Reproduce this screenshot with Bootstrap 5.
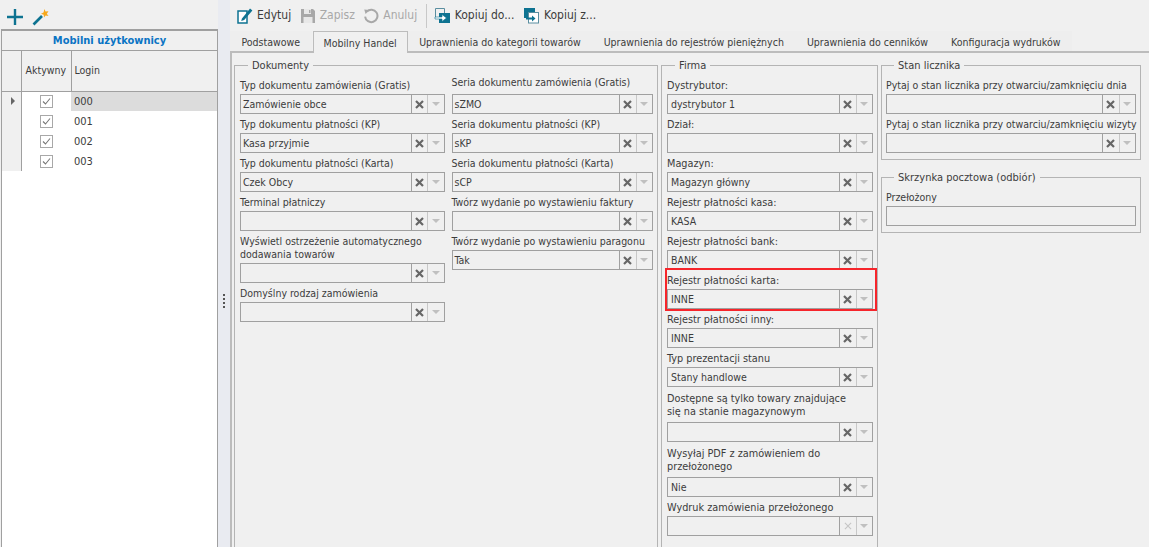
<!DOCTYPE html>
<html lang="pl"><head><meta charset="utf-8"><title>Mobilni użytkownicy</title>
<link href="https://cdn.jsdelivr.net/npm/bootstrap@5.3.0/dist/css/bootstrap.min.css" rel="stylesheet">
<style>
html,body{height:100%;overflow:hidden}
body{background:#f0f0f0;color:#3c3c3c;font-family:"DejaVu Sans Condensed","DejaVu Sans","Noto Sans",sans-serif;font-stretch:condensed;font-size:10.5px;line-height:13px}
.shell{height:547px;width:1149px}
.leftpane{width:218px;flex:none}
.lefttools{height:29px;padding:5px 0 0 7px;gap:9px;align-items:center}
.gridbox{flex:1;margin-left:1px;border:1px solid #a0a0a0;border-top-width:2px;background:#fff;border-bottom:0}
.gridtitle{height:20px;background:#f0f0f0;color:#0a74c4;font-weight:700;font-size:11px;text-align:center;line-height:19px;border-bottom:1px solid #a0a0a0}
.ugrid{width:auto;margin:0;border-collapse:collapse;table-layout:fixed;--bs-table-bg:transparent}
.ugrid th,.ugrid td{padding:0;border:0;font-weight:400;font-size:10.5px;color:#3c3c3c;box-shadow:none}
.ugrid thead th{height:40px;background:#f0f0f0;border-right:1px solid #a0a0a0;border-bottom:1px solid #a0a0a0;vertical-align:middle;padding:0 0 1px 4px}
.ugrid thead th.cind{padding:0}
.ugrid thead th.clog{border-right:0}
.cind{width:19px;border-right:1px solid #a0a0a0!important;background:#f0f0f0!important}
.cact{width:50px;text-align:center}
.clog{width:146px;padding-left:3px!important}
.ugrid tbody td{height:20px;vertical-align:middle;font-size:11px}
.ugrid tbody tr.sel td.clog{background:#dcdcdc}
.ptr{width:0;height:0;border-left:4px solid #666;border-top:4px solid transparent;border-bottom:4px solid transparent;margin-left:9px}
.cbx{display:block;margin:0 auto}
.splitter{width:12px;flex:none;background:#e9ebf1;gap:2px;align-items:center;justify-content:center;padding-top:55px}
.splitter i{display:block;width:2px;height:2px;background:#555}
.rightpane{flex:1;min-width:0}
.toptools{height:31px;align-items:center;padding:0 0 0 7px}
.tbtn{display:flex;align-items:center;gap:4px;padding:0;margin-right:8.5px;font-size:12px;color:#3c3c3c}
.tbtn.off{color:#a8a8a8}
.tsep{width:1px;height:24px;background:#c8c8c8;margin:0 7px 0 0}
.tabline{height:22px;margin:0;border-bottom:2px solid #bcbcbc;padding-left:0;flex-wrap:nowrap;--bs-nav-tabs-border-width:0}
.tabline .nav-link{height:20px;padding:0;color:#3c3c3c;font-size:10.5px;line-height:22px;border:0;border-radius:0;background:none;margin:0;white-space:nowrap}
.tabline .nav-item{padding:0 11.5px;background:#eeeeee}
.tabline .nav-item.on{border:1px solid #bcbcbc;border-bottom:0;background:#f0f0f0;height:22px;padding:0 10px;margin:0 0 -2px 1px}
.tabbody{flex:1;border-left:2px solid #bcbcbc;padding:6px 8px 0 2px;gap:3px;min-height:0;overflow:hidden}
.grp{border:1px solid #b4b4b4;padding:0 4px 3px;margin:0;min-width:0}
.grp legend{float:none;width:auto;font-size:11px;line-height:13px;margin:0 0 6px 8px;padding:0 4px;color:#3c3c3c}
.gdoc{width:424px;flex:none;height:600px;padding-left:5px}
.gfirm{width:217px;flex:none;height:600px;padding-left:5px}
.gfirm .flabel{font-size:10.8px}
.gfirm .combo .val{padding-left:3px}
.gside{width:260px;flex:none;gap:11px}
.gside .flabel{white-space:nowrap}
.field{margin-bottom:3px}
.flabel{display:block;padding-top:1px;margin:0 0 2px}
.combo{height:20px;border:1px solid #a0a0a0;display:flex;align-items:stretch;background:#f0f0f0}
.combo .val{flex:1;padding-left:2px;line-height:19px;font-size:10.5px;white-space:nowrap;overflow:hidden}
.cclr,.cdrop{width:16.5px;border-left:1px solid #c8c8c8;display:flex;align-items:center;justify-content:center;flex:none}
.cclr{border-left-color:#a0a0a0}
.cdrop::after{content:"";width:0;height:0;border-top:4px solid #c0c0c0;border-left:4px solid transparent;border-right:4px solid transparent}
.xicon{width:9px;height:9px;display:block}
.xdim{width:8px;height:8px;display:block}
.col2{width:202px;margin-left:7px}
.col1{width:205px}
.liftlbl{margin-top:-3px;margin-bottom:5px}
.gfirm .twolbl{padding-top:2px;margin-bottom:4px}
.redbox{outline:2px solid #f6252b;margin:-3px -2px 3px 0;padding:3px 2px 0 0}
.plainbox{height:20px;border:1px solid #a0a0a0;background:#f0f0f0}
</style></head>
<body>
<svg width="0" height="0" class="position-absolute"><defs>
<symbol id="xm" viewBox="0 0 9 9"><path d="M1 1l7 7M8 1 1 8" stroke="#666" stroke-width="2.2"/></symbol>
<symbol id="chk" viewBox="0 0 13 13"><rect x=".5" y=".5" width="12" height="12" fill="#fff" stroke="#a8a8a8"/><path d="M3 6.5 5.5 9 10 3.5" fill="none" stroke="#777" stroke-width="1.1"/></symbol>
</defs></svg>
<div class="shell d-flex">
 <div class="leftpane d-flex flex-column">
  <div class="lefttools d-flex">
   <svg width="16" height="16" viewBox="0 0 16 16"><path d="M8 0v16M0 8h16" stroke="#0e7391" stroke-width="2.4"/></svg>
   <svg width="18" height="18" viewBox="0 0 18 18"><path d="M1.5 16.5 10 8" stroke="#0e7391" stroke-width="2.6"/><path d="M12.5 1l1 2.6 3-.3-1.7 2.4 1.7 2.3-2.9-.6-1.6 2.1-.3-2.7-2.7-1 2.5-1.3z" fill="#f7a81b"/></svg>
  </div>
  <div class="gridbox d-flex flex-column">
   <div class="gridtitle">Mobilni użytkownicy</div>
   <table class="table ugrid">
    <thead><tr><th class="cind"></th><th class="cact text-start">Aktywny</th><th class="clog">Login</th></tr></thead>
    <tbody>
     <tr class="sel"><td class="cind"><div class="ptr"></div></td><td class="cact"><svg class="cbx" width="13" height="13"><use href="#chk"/></svg></td><td class="clog">000</td></tr>
     <tr><td class="cind"></td><td class="cact"><svg class="cbx" width="13" height="13"><use href="#chk"/></svg></td><td class="clog">001</td></tr>
     <tr><td class="cind"></td><td class="cact"><svg class="cbx" width="13" height="13"><use href="#chk"/></svg></td><td class="clog">002</td></tr>
     <tr><td class="cind"></td><td class="cact"><svg class="cbx" width="13" height="13"><use href="#chk"/></svg></td><td class="clog">003</td></tr>
    </tbody>
   </table>
  </div>
 </div>
 <div class="splitter d-flex flex-column"><i></i><i></i><i></i><i></i></div>
 <div class="rightpane d-flex flex-column">
  <div class="toptools d-flex">
   <span class="tbtn"><svg width="16" height="17" viewBox="0 0 16 17"><path d="M2 4h8v12H1V4z" fill="#fff" stroke="#0e7391" stroke-width="1.5"/><path d="M5 11.5 13 1.5l2.4 1.9L7.2 13l-3 1z" fill="#0e7391"/></svg>Edytuj</span>
   <span class="tbtn off"><svg width="16" height="16" viewBox="0 0 16 16"><path d="M1 1h12l2 2v12H1z" fill="#a8a8a8"/><rect x="4" y="1" width="7" height="5" fill="#e8e8e8"/><rect x="9" y="2" width="1.5" height="3" fill="#a8a8a8"/><rect x="3.5" y="9" width="9" height="6" fill="#e8e8e8"/></svg>Zapisz</span>
   <span class="tbtn off"><svg width="16" height="16" viewBox="0 0 16 16"><path d="M3.8 3.6a6.2 6.2 0 1 1-1.7 5" fill="none" stroke="#a8a8a8" stroke-width="2"/><path d="M1.2 1.5l5.2.6-3.8 4z" fill="#a8a8a8"/></svg>Anuluj</span>
   <span class="tsep"></span>
   <span class="tbtn"><svg width="17" height="17" viewBox="0 0 17 17"><path d="M1.5 1.5h9v5M1.5 1.5v9h3" fill="none" stroke="#5a8ea0"/><rect x="5" y="6" width="11" height="10" fill="#0e7391"/><path d="M1 10h7V7.5l4.5 3.5L8 14.5V12H1z" fill="#fff" stroke="#0e7391" stroke-width=".6"/></svg>Kopiuj do...</span>
   <span class="tbtn"><svg width="17" height="17" viewBox="0 0 17 17"><rect x="1" y="1" width="11" height="10" fill="#0e7391"/><rect x="5.5" y="5.5" width="10" height="10.5" fill="#fff" stroke="#5a8ea0"/><path d="M3 10.5h6V8.5l3.5 3L9 14.5V12.5H3z" fill="#0e7391"/></svg>Kopiuj z...</span>
  </div>
  <ul class="nav nav-tabs tabline">
   <li class="nav-item"><a class="nav-link" href="#">Podstawowe</a></li>
   <li class="nav-item on"><a class="nav-link" href="#">Mobilny Handel</a></li>
   <li class="nav-item"><a class="nav-link" href="#">Uprawnienia do kategorii towarów</a></li>
   <li class="nav-item"><a class="nav-link" href="#">Uprawnienia do rejestrów pieniężnych</a></li>
   <li class="nav-item"><a class="nav-link" href="#">Uprawnienia do cenników</a></li>
   <li class="nav-item"><a class="nav-link" href="#">Konfiguracja wydruków</a></li>
  </ul>
  <div class="tabbody d-flex">
   <fieldset class="grp gdoc"><legend>Dokumenty</legend>
    <div class="d-flex">
     <div class="col1">
      <div class="field"><label class="flabel">Typ dokumentu zamówienia (Gratis)</label><div class="combo"><span class="val">Zamówienie obce</span><span class="cclr"><svg class="xicon"><use href="#xm"/></svg></span><span class="cdrop"></span></div></div>
      <div class="field"><label class="flabel">Typ dokumentu płatności (KP)</label><div class="combo"><span class="val">Kasa przyjmie</span><span class="cclr"><svg class="xicon"><use href="#xm"/></svg></span><span class="cdrop"></span></div></div>
      <div class="field"><label class="flabel">Typ dokumentu płatności (Karta)</label><div class="combo"><span class="val">Czek Obcy</span><span class="cclr"><svg class="xicon"><use href="#xm"/></svg></span><span class="cdrop"></span></div></div>
      <div class="field"><label class="flabel">Terminal płatniczy</label><div class="combo"><span class="val"></span><span class="cclr"><svg class="xicon"><use href="#xm"/></svg></span><span class="cdrop"></span></div></div>
      <div class="field"><label class="flabel">Wyświetl ostrzeżenie automatycznego dodawania towarów</label><div class="combo"><span class="val"></span><span class="cclr"><svg class="xicon"><use href="#xm"/></svg></span><span class="cdrop"></span></div></div>
      <div class="field"><label class="flabel">Domyślny rodzaj zamówienia</label><div class="combo"><span class="val"></span><span class="cclr"><svg class="xicon"><use href="#xm"/></svg></span><span class="cdrop"></span></div></div>
     </div>
     <div class="col2">
      <div class="field"><label class="flabel liftlbl">Seria dokumentu zamówienia (Gratis)</label><div class="combo"><span class="val">sZMO</span><span class="cclr"><svg class="xicon"><use href="#xm"/></svg></span><span class="cdrop"></span></div></div>
      <div class="field"><label class="flabel">Seria dokumentu płatności (KP)</label><div class="combo"><span class="val">sKP</span><span class="cclr"><svg class="xicon"><use href="#xm"/></svg></span><span class="cdrop"></span></div></div>
      <div class="field"><label class="flabel">Seria dokumentu płatności (Karta)</label><div class="combo"><span class="val">sCP</span><span class="cclr"><svg class="xicon"><use href="#xm"/></svg></span><span class="cdrop"></span></div></div>
      <div class="field"><label class="flabel">Twórz wydanie po wystawieniu faktury</label><div class="combo"><span class="val"></span><span class="cclr"><svg class="xicon"><use href="#xm"/></svg></span><span class="cdrop"></span></div></div>
      <div class="field"><label class="flabel">Twórz wydanie po wystawieniu paragonu</label><div class="combo"><span class="val">Tak</span><span class="cclr"><svg class="xicon"><use href="#xm"/></svg></span><span class="cdrop"></span></div></div>
     </div>
    </div>
   </fieldset>
   <fieldset class="grp gfirm"><legend>Firma</legend>
    <div class="field"><label class="flabel">Dystrybutor:</label><div class="combo"><span class="val">dystrybutor 1</span><span class="cclr"><svg class="xicon"><use href="#xm"/></svg></span><span class="cdrop"></span></div></div>
    <div class="field"><label class="flabel">Dział:</label><div class="combo"><span class="val"></span><span class="cclr"><svg class="xicon"><use href="#xm"/></svg></span><span class="cdrop"></span></div></div>
    <div class="field"><label class="flabel">Magazyn:</label><div class="combo"><span class="val">Magazyn główny</span><span class="cclr"><svg class="xicon"><use href="#xm"/></svg></span><span class="cdrop"></span></div></div>
    <div class="field"><label class="flabel">Rejestr płatności kasa:</label><div class="combo"><span class="val">KASA</span><span class="cclr"><svg class="xicon"><use href="#xm"/></svg></span><span class="cdrop"></span></div></div>
    <div class="field"><label class="flabel">Rejestr płatności bank:</label><div class="combo"><span class="val">BANK</span><span class="cclr"><svg class="xicon"><use href="#xm"/></svg></span><span class="cdrop"></span></div></div>
    <div class="field redbox"><label class="flabel">Rejestr płatności karta:</label><div class="combo"><span class="val">INNE</span><span class="cclr"><svg class="xicon"><use href="#xm"/></svg></span><span class="cdrop"></span></div></div>
    <div class="field"><label class="flabel">Rejestr płatności inny:</label><div class="combo"><span class="val">INNE</span><span class="cclr"><svg class="xicon"><use href="#xm"/></svg></span><span class="cdrop"></span></div></div>
    <div class="field"><label class="flabel">Typ prezentacji stanu</label><div class="combo"><span class="val">Stany handlowe</span><span class="cclr"><svg class="xicon"><use href="#xm"/></svg></span><span class="cdrop"></span></div></div>
    <div class="field"><label class="flabel twolbl">Dostępne są tylko towary znajdujące<br>się na stanie magazynowym</label><div class="combo"><span class="val"></span><span class="cclr"><svg class="xicon"><use href="#xm"/></svg></span><span class="cdrop"></span></div></div>
    <div class="field"><label class="flabel twolbl">Wysyłaj PDF z zamówieniem do<br>przełożonego</label><div class="combo"><span class="val">Nie</span><span class="cclr"><svg class="xicon"><use href="#xm"/></svg></span><span class="cdrop"></span></div></div>
    <div class="field"><label class="flabel">Wydruk zamówienia przełożonego</label><div class="combo"><span class="val"></span><span class="cclr"><svg class="xdim" viewBox="0 0 9 9"><path d="M1 1l7 7M8 1 1 8" stroke="#c4c4c4" stroke-width="1.2"/></svg></span><span class="cdrop"></span></div></div>
   </fieldset>
   <div class="gside d-flex flex-column">
    <fieldset class="grp"><legend>Stan licznika</legend>
     <div class="field"><label class="flabel">Pytaj o stan licznika przy otwarciu/zamknięciu dnia</label><div class="combo"><span class="val"></span><span class="cclr"><svg class="xicon"><use href="#xm"/></svg></span><span class="cdrop"></span></div></div>
     <div class="field"><label class="flabel">Pytaj o stan licznika przy otwarciu/zamknięciu wizyty</label><div class="combo"><span class="val"></span><span class="cclr"><svg class="xicon"><use href="#xm"/></svg></span><span class="cdrop"></span></div></div>
    </fieldset>
    <fieldset class="grp"><legend>Skrzynka pocztowa (odbiór)</legend>
     <div class="field"><label class="flabel">Przełożony</label><div class="plainbox"></div></div>
    </fieldset>
   </div>
  </div>
 </div>
</div>
</body></html>
